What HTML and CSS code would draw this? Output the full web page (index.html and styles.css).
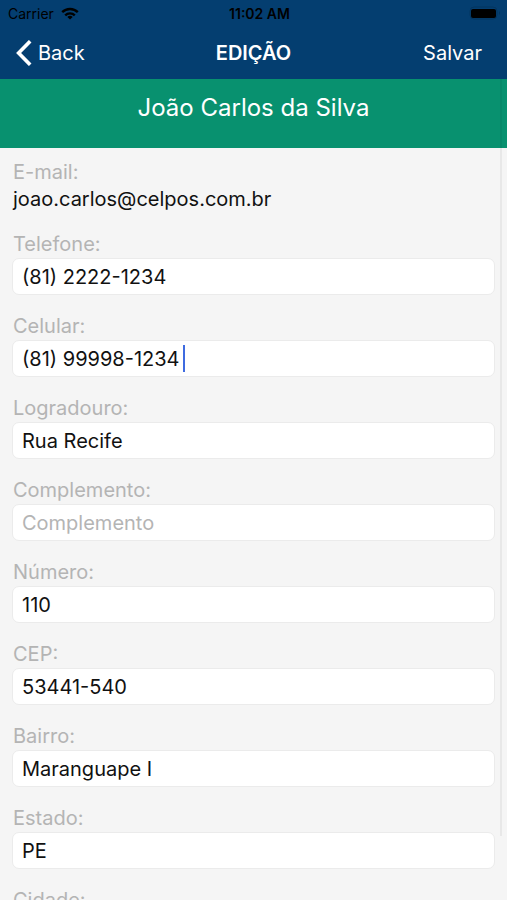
FILE: index.html
```html
<!DOCTYPE html>
<html lang="pt-BR">

<head>
    <meta charset="UTF-8">
    <meta name="viewport" content="width=device-width, initial-scale=1.0">
    <title>Edição</title>
    <link rel="stylesheet" href="styles.css">
</head>

<body>
    <header class="topbar">
        <div class="status">
            <div class="carrier">
                <span>Carrier</span>
                <svg width="18" height="13" viewBox="0 0 18 13" fill="none" stroke="#000" stroke-width="2.4">
                    <path d="M1.2 5.2a11.2 11.2 0 0 1 15.6 0M4.2 8.3a6.9 6.9 0 0 1 9.6 0" />
                    <path d="M9 12.6L6.3 10a3.8 3.8 0 0 1 5.4 0z" fill="#000" stroke="none" />
                </svg>
            </div>
            <span class="time">11:02 AM</span>
            <svg class="battery" width="32" height="14" viewBox="0 0 32 14">
                <rect x="1" y="1" width="27" height="12" rx="4" fill="none" stroke="#03355f" />
                <path d="M30 5q2 2 0 4z" fill="#03355f" />
                <rect x="2" y="3" width="25" height="9" rx="2" />
            </svg>
        </div>
        <nav class="navbar">
            <button class="back" type="button">
                <svg width="16" height="26" viewBox="0 0 16 26" fill="none" stroke="#fff" stroke-width="3.6">
                    <path d="M14.2 1.2L2.6 13l11.6 11.8" />
                </svg>
                Back
            </button>
            <h1>EDIÇÃO</h1>
            <button class="save" type="submit" form="editForm">Salvar</button>
        </nav>
    </header>

    <main>
        <h2>João Carlos da Silva</h2>
        <form id="editForm">
            <div class="field">
                <span class="label">E-mail:</span>
                <span class="email">joao.carlos@celpos.com.br</span>
            </div>
            <div class="field">
                <label for="telefone">Telefone:</label>
                <input type="tel" id="telefone" value="(81) 2222-1234">
            </div>
            <div class="field">
                <label for="celular">Celular:</label>
                <div class="editing">
                    <input type="tel" id="celular" value="(81) 99998-1234">
                    <span class="caret"></span>
                </div>
            </div>
            <div class="field">
                <label for="logradouro">Logradouro:</label>
                <input type="text" id="logradouro" value="Rua Recife">
            </div>
            <div class="field">
                <label for="complemento">Complemento:</label>
                <input type="text" id="complemento" placeholder="Complemento">
            </div>
            <div class="field">
                <label for="numero">Número:</label>
                <input type="text" id="numero" value="110">
            </div>
            <div class="field">
                <label for="cep">CEP:</label>
                <input type="text" id="cep" value="53441-540">
            </div>
            <div class="field">
                <label for="bairro">Bairro:</label>
                <input type="text" id="bairro" value="Maranguape I">
            </div>
            <div class="field">
                <label for="estado">Estado:</label>
                <input type="text" id="estado" value="PE">
            </div>
            <div class="field">
                <label for="cidade">Cidade:</label>
                <input type="text" id="cidade">
            </div>
        </form>
    </main>
    <div class="scroll-thumb"></div>
</body>

</html>
```

FILE: styles.css
```css
* {
    box-sizing: border-box;
}

body {
    position: relative;
    display: flex;
    flex-direction: column;
    height: 100vh;
    margin: 0;
    overflow: hidden;
    background-color: #f5f5f5;
    color: #111;
    font-family: Inter, "Liberation Sans", sans-serif;
    font-size: 20px;
}

.topbar {
    background-color: #043e70;
    color: #fff;
}

.status {
    display: grid;
    grid-template-columns: 1fr auto 1fr;
    align-items: center;
    height: 26px;
    padding: 0 6px 0 8px;
    color: #000;
    font-size: 14px;
}

.carrier {
    display: flex;
    align-items: center;
    gap: 7px;
}

.time {
    margin-left: 10px;
    font-weight: 600;
}

.battery {
    justify-self: end;
}

.navbar {
    display: grid;
    grid-template-columns: 1fr auto 1fr;
    align-items: center;
    height: 53px;
    padding: 0 16px;
}

.navbar button {
    padding: 0;
    border: 0;
    background: none;
    color: #fff;
    font: inherit;
    cursor: pointer;
}

.navbar .back {
    display: flex;
    align-items: center;
    justify-self: start;
    gap: 6px;
}

.navbar .save {
    justify-self: end;
    padding-right: 9px;
}

h1 {
    margin: 0;
    font-size: 20px;
    font-weight: 600;
}

main {
    flex: 1;
    min-height: 0;
    overflow-y: auto;
    scrollbar-width: none;
}

h2 {
    margin: 0;
    padding: 12px 16px 23px;
    background-color: #08916f;
    color: #fff;
    font-size: 24px;
    font-weight: 400;
    line-height: 34px;
    text-align: center;
}

form {
    display: flex;
    flex-direction: column;
    gap: 18px;
    padding: 11px 12px 24px;
}

.field {
    display: flex;
    flex-direction: column;
    line-height: 27px;
}

.label,
label {
    padding-left: 1px;
    color: #b4b4b4;
}

.email {
    padding-left: 1px;
}

input {
    width: 100%;
    height: 37px;
    padding: 0 9px;
    border: 1px solid #ebebeb;
    border-radius: 7px;
    background-color: #fff;
    color: #111;
    font: inherit;
}

input::placeholder {
    color: #b4b4b4;
}

.editing {
    position: relative;
    display: flex;
}

.caret {
    position: absolute;
    top: 5px;
    left: 171px;
    width: 2px;
    height: 27px;
    background-color: #3f6be0;
}

/* overlay scroll indicator */
.scroll-thumb {
    position: absolute;
    top: 79px;
    right: 5px;
    bottom: 64px;
    width: 2px;
    background-color: rgba(0, 0, 0, 0.05);
}
```
